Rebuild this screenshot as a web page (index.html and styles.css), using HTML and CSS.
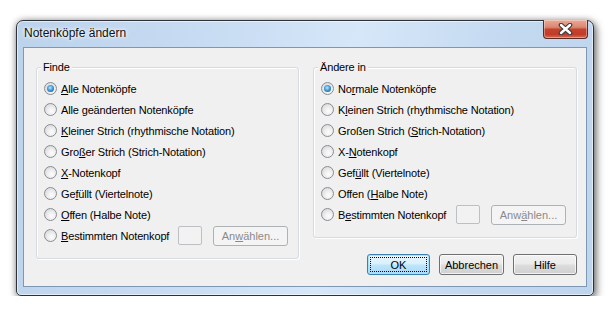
FILE: index.html
```html
<!DOCTYPE html>
<html lang="de">
<head>
  <meta charset="UTF-8">
  <title>Notenköpfe ändern</title>
  <link rel="stylesheet" href="styles.css">
</head>
<body>

<div class="window">
  <div class="titlebar">
    <span class="title">Notenköpfe ändern</span>
    <button class="close" type="button">
      <svg width="17" height="12" viewBox="0 0 17 12">
        <path d="M4 2 L13 10 M13 2 L4 10" stroke="#3b3b3b" stroke-width="4.6" stroke-linecap="round"/>
        <path d="M4 2 L13 10 M13 2 L4 10" stroke="#fff" stroke-width="2.4" stroke-linecap="round"/>
      </svg>
    </button>
  </div>

  <div class="client">
    <!-- Finde -->
    <div class="group">
      <span class="legend">Finde</span>
      <label class="option"><span class="radio checked"></span><span><u>A</u>lle Notenköpfe</span></label>
      <label class="option"><span class="radio"></span><span>Alle <u>g</u>eänderten Notenköpfe</span></label>
      <label class="option"><span class="radio"></span><span><u>K</u>leiner Strich (rhythmische Notation)</span></label>
      <label class="option"><span class="radio"></span><span>Gro<u>ß</u>er Strich (Strich-Notation)</span></label>
      <label class="option"><span class="radio"></span><span><u>X</u>-Notenkopf</span></label>
      <label class="option"><span class="radio"></span><span>Ge<u>f</u>üllt (Viertelnote)</span></label>
      <label class="option"><span class="radio"></span><span><u>O</u>ffen (Halbe Note)</span></label>
      <label class="option">
        <span class="radio"></span><span><u>B</u>estimmten Notenkopf</span>
        <span class="swatch"></span>
        <button class="pick" type="button" disabled>An<u>w</u>ählen...</button>
      </label>
    </div>

    <div class="side">
      <!-- Ändere in -->
      <div class="group">
        <span class="legend">Ändere in</span>
        <label class="option"><span class="radio checked"></span><span>No<u>r</u>male Notenköpfe</span></label>
        <label class="option"><span class="radio"></span><span>K<u>l</u>einen Strich (rhythmische Notation)</span></label>
        <label class="option"><span class="radio"></span><span>Großen Strich (<u>S</u>trich-Notation)</span></label>
        <label class="option"><span class="radio"></span><span>X-<u>N</u>otenkopf</span></label>
        <label class="option"><span class="radio"></span><span>Gef<u>ü</u>llt (Viertelnote)</span></label>
        <label class="option"><span class="radio"></span><span>Offen (<u>H</u>albe Note)</span></label>
        <label class="option">
          <span class="radio"></span><span>B<u>e</u>stimmten Notenkopf</span>
          <span class="swatch"></span>
          <button class="pick" type="button" disabled>Anw<u>ä</u>hlen...</button>
        </label>
      </div>

      <div class="buttons">
        <button class="btn default" type="button"><span class="focus">OK</span></button>
        <button class="btn wide" type="button">Abbrechen</button>
        <button class="btn help" type="button">Hilfe</button>
      </div>
    </div>
  </div>
</div>

</body>
</html>
```

FILE: styles.css
```css
* {
  box-sizing: border-box;
}
body {
  margin: 0;
  background-color: #fff;
  font-family: "Liberation Sans", Arial, sans-serif;
  font-size: 11px;
  color: #000;
}
.window {
  margin: 20px 0 0 16px;
  width: 578px;
  height: 276px;
  padding: 0 6px 8px 6px;
  border: 1px solid #2e3238;
  border-radius: 7px 7px 5px 5px;
  background: linear-gradient(100deg, #bcd3ec 0%, #c9ddf3 35%, #d6e7f9 55%, #c3d9f0 80%, #bed5ee 100%);
  box-shadow: inset 0 0 0 1px rgba(255,255,255,0.55), 2px 3px 9px rgba(0,0,0,0.55), 0 0 6px rgba(0,0,0,0.25);
}
.titlebar {
  display: flex;
  align-items: flex-start;
  height: 26px;
  padding-left: 1px;
}
.title {
  font-size: 12px;
  line-height: 24px;
  color: #101010;
  text-shadow: 0 0 5px #fff, 0 0 3px #fff;
}
.close {
  margin: -1px -1px 0 auto;
  width: 45px;
  height: 19px;
  padding: 0;
  display: flex;
  align-items: center;
  justify-content: center;
  border: 1px solid #5a2a24;
  border-top: none;
  border-radius: 0 0 4px 4px;
  background: linear-gradient(#e9a996 0%, #dc8771 40%, #c4432d 52%, #c33b26 80%, #d0705a 100%);
  box-shadow: inset 0 0 0 1px rgba(255,255,255,0.35);
}
.client {
  display: flex;
  gap: 14px;
  height: 240px;
  padding: 19px 9px 0 12px;
  border: 1px solid #7f97b3;
  background-color: #f0f0f0;
  letter-spacing: -0.15px;
}
.group {
  position: relative;
  width: 263px;
  padding: 10px 10px 12px 7px;
  border: 1px solid #d5dbe0;
  border-radius: 3px;
  box-shadow: inset 1px 1px 0 #fff, 1px 1px 0 #fff;
  align-self: flex-start;
}
.side .group {
  width: 264px;
}
.legend {
  position: absolute;
  top: -7px;
  left: 4px;
  padding: 0 2px;
  line-height: 13px;
  background-color: #f0f0f0;
}
.option {
  display: flex;
  align-items: center;
  height: 21px;
  gap: 4px;
  white-space: nowrap;
}
u {
  text-underline-offset: 1px;
}
.radio {
  position: relative;
  flex: none;
  width: 13px;
  height: 13px;
  border-radius: 50%;
  border: 1px solid #8a8d90;
  background: radial-gradient(circle at 60% 65%, #fdfdfd 0%, #f0f0f0 35%, #cfd1d3 100%);
}
.radio.checked::after {
  content: "";
  position: absolute;
  left: 2px;
  top: 2px;
  width: 7px;
  height: 7px;
  border-radius: 50%;
  background: radial-gradient(circle at 45% 40%, #c4ecff 0%, #4ba4e2 40%, #1d5c94 85%);
}
.swatch {
  margin-left: auto;
  width: 24px;
  height: 19px;
  border: 1px solid #bcc0c4;
  border-radius: 2px;
  background-color: #f2f2f2;
}
.pick {
  margin-left: 7px;
  width: 75px;
  height: 20px;
  padding: 0;
  border: 1px solid #adb2b5;
  border-radius: 3px;
  background-color: #f4f4f4;
  color: #8a8a8a;
  font: inherit;
}
.buttons {
  display: flex;
  justify-content: flex-end;
  gap: 9px;
  margin-top: 16px;
}
.btn {
  width: 65px;
  height: 21px;
  padding: 0;
  border: 1px solid #707070;
  border-radius: 3px;
  background: linear-gradient(#f2f2f2 0%, #ebebeb 48%, #dddddd 52%, #cfcfcf 100%);
  box-shadow: inset 0 0 0 1px rgba(255,255,255,0.7);
  font: inherit;
  color: #000;
}
.btn.help {
  width: 64px;
}
.btn.default {
  width: 63px;
  padding: 2px;
  border-color: #3c7fb1;
  box-shadow: inset 0 0 0 1px #a6e1fa;
  background: linear-gradient(#eaf6fd 0%, #d9f0fc 48%, #bee6fd 52%, #a7d9f5 100%);
}
.focus {
  display: flex;
  align-items: center;
  justify-content: center;
  height: 100%;
  border: 1px dotted #000;
}
```
